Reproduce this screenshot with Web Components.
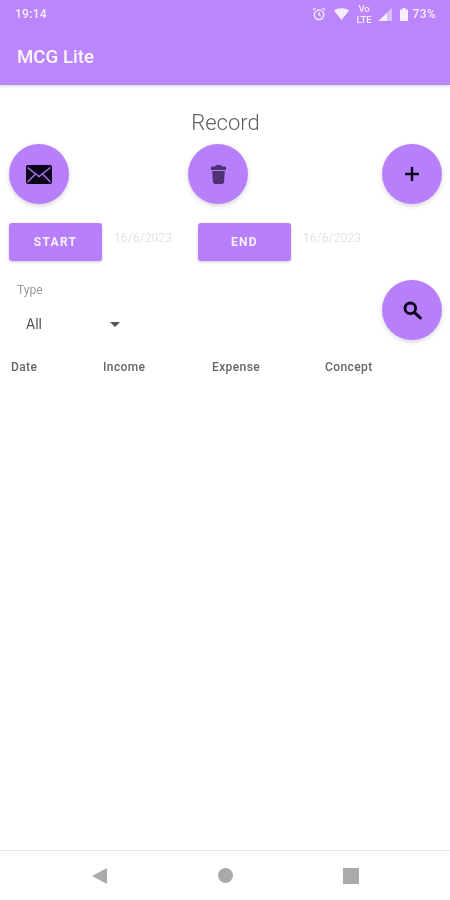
<!DOCTYPE html>
<html>
<head>
<meta charset="utf-8">
<title>MCG Lite</title>
<style>
  html, body { margin: 0; height: 100%; background: #fff; }
  body { font-family: Roboto, "Liberation Sans", sans-serif; }
</style>
</head>
<body>
<record-page></record-page>

<script>
const ICONS = {
  mail: '<svg width="26" height="19" viewBox="0 0 26 19"><rect x="0" y="0" width="26" height="19" rx="2" fill="#0c0418"/><path d="M1.500 2.500L13 11.500l11.500-9M1.500 17l8-8M24.500 17l-8-8" fill="none" stroke="#a873ea" stroke-width="1.500"/></svg>',
  trash: '<svg width="15" height="19" viewBox="0 0 15 19"><path d="M5 0h5l.8 1.500h3c.7 0 1.200.5 1.200 1.200V5H0V2.700c0-.7.5-1.200 1.200-1.200h3z" fill="#4f3272"/><path d="M1.200 6h12.600l-.7 10.800c-.1 1.300-1 2.200-2.300 2.200H4.200c-1.300 0-2.200-.9-2.300-2.200z" fill="#4f3272"/></svg>',
  plus: '<svg width="14" height="14" viewBox="0 0 14 14"><path d="M7 0v14M0 7h14" stroke="#0c0418" stroke-width="2.400" fill="none"/></svg>',
  search: '<svg width="19" height="19" viewBox="0 0 19 19"><circle cx="7.300" cy="7.300" r="5.300" fill="none" stroke="#0c0418" stroke-width="2.800"/><path d="M11.300 11.300l6 5.600" stroke="#0c0418" stroke-width="3" stroke-linecap="round" fill="none"/></svg>'
};

// status bar with the clock on the left and the system icons on the right
class StatusBar extends HTMLElement {
  constructor() {
    super();
    this.attachShadow({ mode: 'open' });
    this.shadowRoot.innerHTML = `
      <style>
        :host {
          display: flex;
          align-items: center;
          height: 28px;
          padding: 0 14px 0 15px;
          color: #f6edff;
          font-size: 12px;
          font-weight: 500;
          letter-spacing: .3px;
        }
        .time { flex: 1; }
        .icons { display: flex; align-items: center; }
        svg { display: block; }
        .volte { font-size: 9.500px; line-height: 11.200px; text-align: center; margin: 0 6px 0 7px; letter-spacing: 0; }
        .volte span { display: block; }
        .pct { margin-left: 5px; }
      </style>
      <span class="time">19:14</span>
      <span class="icons">
        <svg width="14" height="14" viewBox="0 0 14 14" style="margin-right:8px"><circle cx="7" cy="7.800" r="4.700" fill="none" stroke="#f6edff" stroke-width="1.500"/><path d="M7 5v3l2 1.300M1 3l2.500-2M13 3l-2.500-2" fill="none" stroke="#f6edff" stroke-width="1.200"/></svg>
        <svg width="15" height="12" viewBox="0 0 15 12"><path d="M0 2.500C4 -.5 11 -.5 15 2.500L7.500 12z" fill="#f6edff"/></svg>
        <span class="volte"><span>Vo</span><span>LTE</span></span>
        <svg width="14" height="13" viewBox="0 0 14 13"><path d="M14 0v13H0z" fill="#d9bfff"/><path d="M9 5v8H1z" fill="#f6edff"/></svg>
        <svg width="8" height="13" viewBox="0 0 8 13" style="margin-left:8px"><path d="M2.500 0h3v1.500H8V13H0V1.500h2.500z" fill="#f6edff"/></svg>
        <span class="pct">73%</span>
      </span>
    `;
  }
}

class AppBar extends HTMLElement {
  constructor() {
    super();
    this.attachShadow({ mode: 'open' });
    this.shadowRoot.innerHTML = `
      <style>
        :host {
          display: block;
          background: #bb86fc;
          height: 85px;
          box-shadow: 0 1px 3px rgba(0,0,0,.2);
          position: relative;
        }
        .title {
          padding: 18px 17px 0;
          color: #fbf7ff;
          font-size: 18.700px;
          font-weight: 500;
          line-height: 22px;
        }
      </style>
      <status-bar></status-bar>
      <div class="title"><slot></slot></div>
    `;
  }
}

class RoundButton extends HTMLElement {
  constructor() {
    super();
    this.attachShadow({ mode: 'open' });
  }
  connectedCallback() {
    this.shadowRoot.innerHTML = `
      <style>
        :host {
          display: flex;
          align-items: center;
          justify-content: center;
          flex: none;
          width: 60px;
          height: 60px;
          border-radius: 50%;
          background: #b87ffc;
          box-shadow: 0 2px 5px rgba(0,0,0,.16);
        }
        svg { display: block; }
      </style>
      ${ICONS[this.getAttribute('icon')]}
    `;
  }
}

class DateButton extends HTMLElement {
  constructor() {
    super();
    this.attachShadow({ mode: 'open' });
    this.shadowRoot.innerHTML = `
      <style>
        :host { display: flex; align-items: center; }
        .btn {
          width: 93px;
          height: 38px;
          display: flex;
          align-items: center;
          justify-content: center;
          border-radius: 3px;
          background: #b87ffc;
          box-shadow: 0 1px 3px rgba(0,0,0,.2);
          color: #f8f1ff;
          font-size: 12px;
          font-weight: 700;
          letter-spacing: 1.300px;
          line-height: 14px;
        }
        .date {
          margin: 0 0 8px 12px;
          color: #e4e4e4;
          font-size: 12px;
          letter-spacing: .1px;
          line-height: 14px;
        }
      </style>
      <div class="btn"><slot></slot></div>
      <span class="date"></span>
    `;
  }
  connectedCallback() {
    this.shadowRoot.querySelector('.date').textContent = this.getAttribute('date');
  }
}

class TypeSelect extends HTMLElement {
  constructor() {
    super();
    this.attachShadow({ mode: 'open' });
    this.shadowRoot.innerHTML = `
      <style>
        :host { display: block; padding: 3px 0 0 8px; }
        .label { color: #9a9a9a; font-size: 12px; line-height: 14px; }
        .value {
          display: flex;
          align-items: center;
          justify-content: space-between;
          width: 94px;
          margin: 19px 0 0 9px;
          color: #555;
          font-size: 14px;
          line-height: 16px;
        }
        .arrow {
          width: 0;
          height: 0;
          border: 5px solid transparent;
          border-top: 5px solid #555;
          border-bottom: 0;
        }
      </style>
      <div class="label">Type</div>
      <div class="value"><slot></slot><span class="arrow"></span></div>
    `;
  }
}

class RecordHeader extends HTMLElement {
  constructor() {
    super();
    this.attachShadow({ mode: 'open' });
    this.shadowRoot.innerHTML = `
      <style>
        :host {
          display: grid;
          grid-template-columns: 92px 109px 113px 1fr;
          padding-left: 2px;
          color: #666;
          font-size: 12px;
          font-weight: 500;
          letter-spacing: .4px;
          line-height: 14px;
        }
      </style>
      <span>Date</span><span>Income</span><span>Expense</span><span>Concept</span>
    `;
  }
}

class NavBar extends HTMLElement {
  constructor() {
    super();
    this.attachShadow({ mode: 'open' });
    this.shadowRoot.innerHTML = `
      <style>
        :host {
          display: flex;
          align-items: center;
          justify-content: space-between;
          height: 49px;
          padding: 0 91px 0 92px;
          border-top: 1px solid #e6e6e6;
        }
        svg { display: block; }
      </style>
      <svg width="15" height="16" viewBox="0 0 15 16"><path d="M15 0v16L0 8z" fill="#aaa"/></svg>
      <svg width="15" height="15" viewBox="0 0 15 15"><circle cx="7.500" cy="7.500" r="7.500" fill="#aaa"/></svg>
      <svg width="16" height="16" viewBox="0 0 16 16"><rect width="16" height="16" fill="#aaa"/></svg>
    `;
  }
}

class RecordPage extends HTMLElement {
  constructor() {
    super();
    this.attachShadow({ mode: 'open' });
    this.shadowRoot.innerHTML = `
      <style>
        /* the reference is a soft, upscaled capture */
        :host { display: flex; flex-direction: column; height: 900px; filter: blur(.45px); }
        main { flex: 1; padding: 0 8px 0 9px; }
        h1 {
          margin: 25px 0 9px;
          color: #5f5f5f;
          font-size: 22px;
          font-weight: 300;
          line-height: 25px;
          text-align: center;
        }
        .actions { display: flex; }
        .actions round-button:nth-child(2) { margin-left: 119px; }
        .actions round-button:nth-child(3) { margin-left: auto; }
        .dates { display: flex; gap: 26px; margin-top: 19px; }
        .filter { display: flex; justify-content: space-between; margin-top: 19px; }
        record-header { margin-top: 20px; }
      </style>
      <app-bar>MCG Lite</app-bar>
      <main>
        <h1>Record</h1>
        <div class="actions">
          <round-button icon="mail"></round-button>
          <round-button icon="trash"></round-button>
          <round-button icon="plus"></round-button>
        </div>
        <div class="dates">
          <date-button date="16/6/2023">START</date-button>
          <date-button date="16/6/2023">END</date-button>
        </div>
        <div class="filter">
          <type-select>All</type-select>
          <round-button icon="search"></round-button>
        </div>
        <record-header></record-header>
      </main>
      <nav-bar></nav-bar>
    `;
  }
}

customElements.define('status-bar', StatusBar);
customElements.define('app-bar', AppBar);
customElements.define('round-button', RoundButton);
customElements.define('date-button', DateButton);
customElements.define('type-select', TypeSelect);
customElements.define('record-header', RecordHeader);
customElements.define('nav-bar', NavBar);
customElements.define('record-page', RecordPage);
</script>
</body>
</html>
